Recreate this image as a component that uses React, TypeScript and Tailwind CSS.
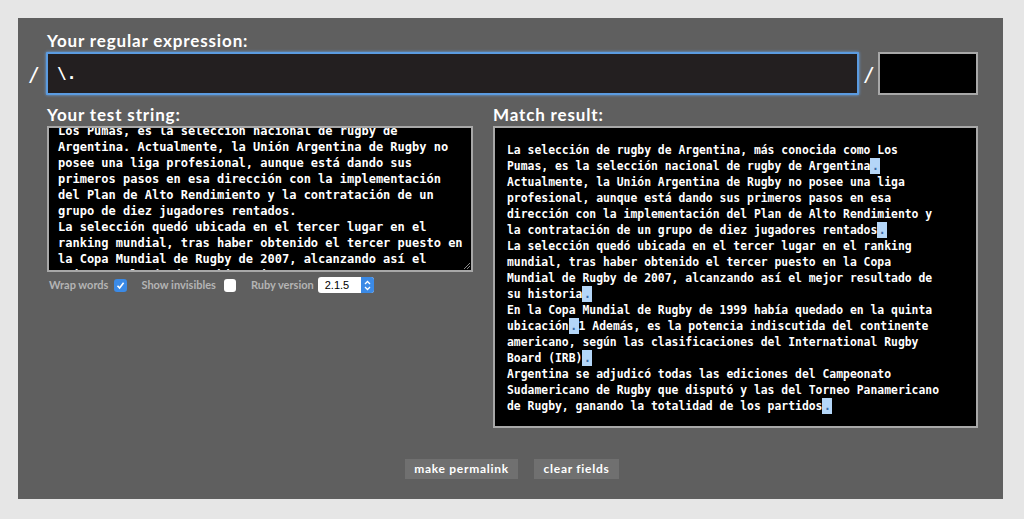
import React from "react";

const testLines = [
  "La selección de rugby de Argentina, más conocida como",
  "Los Pumas, es la selección nacional de rugby de",
  "Argentina. Actualmente, la Unión Argentina de Rugby no",
  "posee una liga profesional, aunque está dando sus",
  "primeros pasos en esa dirección con la implementación",
  "del Plan de Alto Rendimiento y la contratación de un",
  "grupo de diez jugadores rentados.",
  "La selección quedó ubicada en el tercer lugar en el",
  "ranking mundial, tras haber obtenido el tercer puesto en",
  "la Copa Mundial de Rugby de 2007, alcanzando así el",
  "mejor resultado de su historia.",
];

// "|" marks a match of \.
const resultLines = [
  "La selección de rugby de Argentina, más conocida como Los",
  "Pumas, es la selección nacional de rugby de Argentina|",
  "Actualmente, la Unión Argentina de Rugby no posee una liga",
  "profesional, aunque está dando sus primeros pasos en esa",
  "dirección con la implementación del Plan de Alto Rendimiento y",
  "la contratación de un grupo de diez jugadores rentados|",
  "La selección quedó ubicada en el tercer lugar en el ranking",
  "mundial, tras haber obtenido el tercer puesto en la Copa",
  "Mundial de Rugby de 2007, alcanzando así el mejor resultado de",
  "su historia|",
  "En la Copa Mundial de Rugby de 1999 había quedado en la quinta",
  "ubicación|1 Además, es la potencia indiscutida del continente",
  "americano, según las clasificaciones del International Rugby",
  "Board (IRB)|",
  "Argentina se adjudicó todas las ediciones del Campeonato",
  "Sudamericano de Rugby que disputó y las del Torneo Panamericano",
  "de Rugby, ganando la totalidad de los partidos|",
];

const mono = { fontFamily: '"DejaVu Sans Mono", "Liberation Mono", monospace' };
const label = { fontFamily: 'Lato, "Open Sans", sans-serif' };

function ResultLine({ text }: { text: string }) {
  const parts = text.split("|");
  return (
    <div className="h-4 whitespace-pre">
      {parts.map((p, i) => (
        <React.Fragment key={i}>
          {p}
          {i < parts.length - 1 && (
            <span className="inline-block h-4 bg-[#b4d6f8] px-[1.5px] align-top text-[#3a6aa6]">.</span>
          )}
        </React.Fragment>
      ))}
    </div>
  );
}

export default function App() {
  return (
    <div className="min-h-[519px] w-[1024px] bg-[#e6e6e6] pt-[18px]">
      <div
        className="ml-[18px] h-[481px] w-[985px] bg-[#5f5f5f] pt-[12px]"
        style={label}
      >
        {/* Regex */}
        <div className="pl-[29px] h-[22px] text-[17px] font-bold leading-[22px] tracking-[0.05em] text-white">
          Your regular expression:
        </div>
        <div className="flex items-center pl-[10px] pr-[25px]">
          <span className="w-[18px] text-[20px] text-white" style={mono}>/</span>
          <div className="flex h-[43px] flex-1 items-center rounded-[1px] border-2 border-[#5b9be0] bg-[#231f20] pl-[9px] text-[16px] font-bold text-white shadow-[0_0_3px_#6aa8ec]" style={mono}>
            \.
          </div>
          <span className="w-[19px] pl-[4px] text-[20px] text-white" style={mono}>/</span>
          <div className="h-[43px] w-[100px] border-2 border-[#a8a8a8] bg-black" />
        </div>

        {/* Columns */}
        <div className="mt-[9px] flex gap-[20px] pl-[29px]">
          <div className="w-[426px]">
            <div className="h-[22px] text-[17px] font-bold leading-[22px] tracking-[0.05em] text-white">
              Your test string:
            </div>
            <div className="relative h-[146px] overflow-hidden border-2 border-[#a8a8a8] bg-black">
              <div className="mt-[-21px] pl-[9px] text-[12px] font-bold leading-4 text-white" style={mono}>
                {testLines.map((l, i) => (
                  <div key={i} className="h-4 whitespace-pre">{l}</div>
                ))}
              </div>
              <svg className="absolute bottom-0 right-0" width="9" height="9" viewBox="0 0 9 9">
                <path d="M8 2 L2 8 M8 5 L5 8" stroke="#8a8a8a" strokeWidth="1" />
              </svg>
            </div>
            <div className="mt-[5px] flex items-center text-[11px] font-bold text-[#b4b4b4]">
              <span className="ml-[2px]">Wrap words</span>
              <span className="ml-[6px] flex h-[13px] w-[13px] items-center justify-center rounded-[3px] bg-[#3b8ae6]">
                <svg width="9" height="9" viewBox="0 0 9 9">
                  <path d="M1.5 4.8 L3.6 7 L7.6 1.8" stroke="white" strokeWidth="1.6" fill="none" />
                </svg>
              </span>
              <span className="ml-[14px]">Show invisibles</span>
              <span className="ml-[8px] h-[13px] w-[12px] rounded-[3px] bg-white" />
              <span className="ml-[15px]">Ruby version</span>
              <span className="ml-[4px] flex h-[16px] w-[56px] items-center justify-between rounded-[3px] bg-white pl-[7px] text-[11px] font-normal text-black" style={{ fontFamily: '"Liberation Sans", sans-serif' }}>
                2.1.5
                <span className="flex h-[16px] w-[13px] items-center justify-center rounded-r-[3px] bg-[#3b8ae6]">
                  <svg width="7" height="11" viewBox="0 0 7 11">
                    <path d="M1 4 L3.5 1.5 L6 4 M1 7 L3.5 9.5 L6 7" stroke="white" strokeWidth="1.3" fill="none" />
                  </svg>
                </span>
              </span>
            </div>
          </div>

          <div className="w-[485px]">
            <div className="h-[22px] text-[17px] font-bold leading-[22px] tracking-[0.05em] text-white">
              Match result:
            </div>
            <div className="h-[302px] border-2 border-[#a8a8a8] bg-black pl-[12px] pt-[14px] text-[11.4px] font-bold leading-4 text-white" style={mono}>
              {resultLines.map((l, i) => (
                <ResultLine key={i} text={l} />
              ))}
            </div>
          </div>
        </div>

        {/* Buttons */}
        <div className="mt-[31px] flex justify-center gap-[16px] pl-[3px]">
          <button className="h-[20px] w-[113px] bg-[#707070] text-[12px] font-bold tracking-[0.06em] text-white">
            make permalink
          </button>
          <button className="h-[20px] w-[85px] bg-[#707070] text-[12px] font-bold tracking-[0.06em] text-white">
            clear fields
          </button>
        </div>
      </div>
    </div>
  );
}
